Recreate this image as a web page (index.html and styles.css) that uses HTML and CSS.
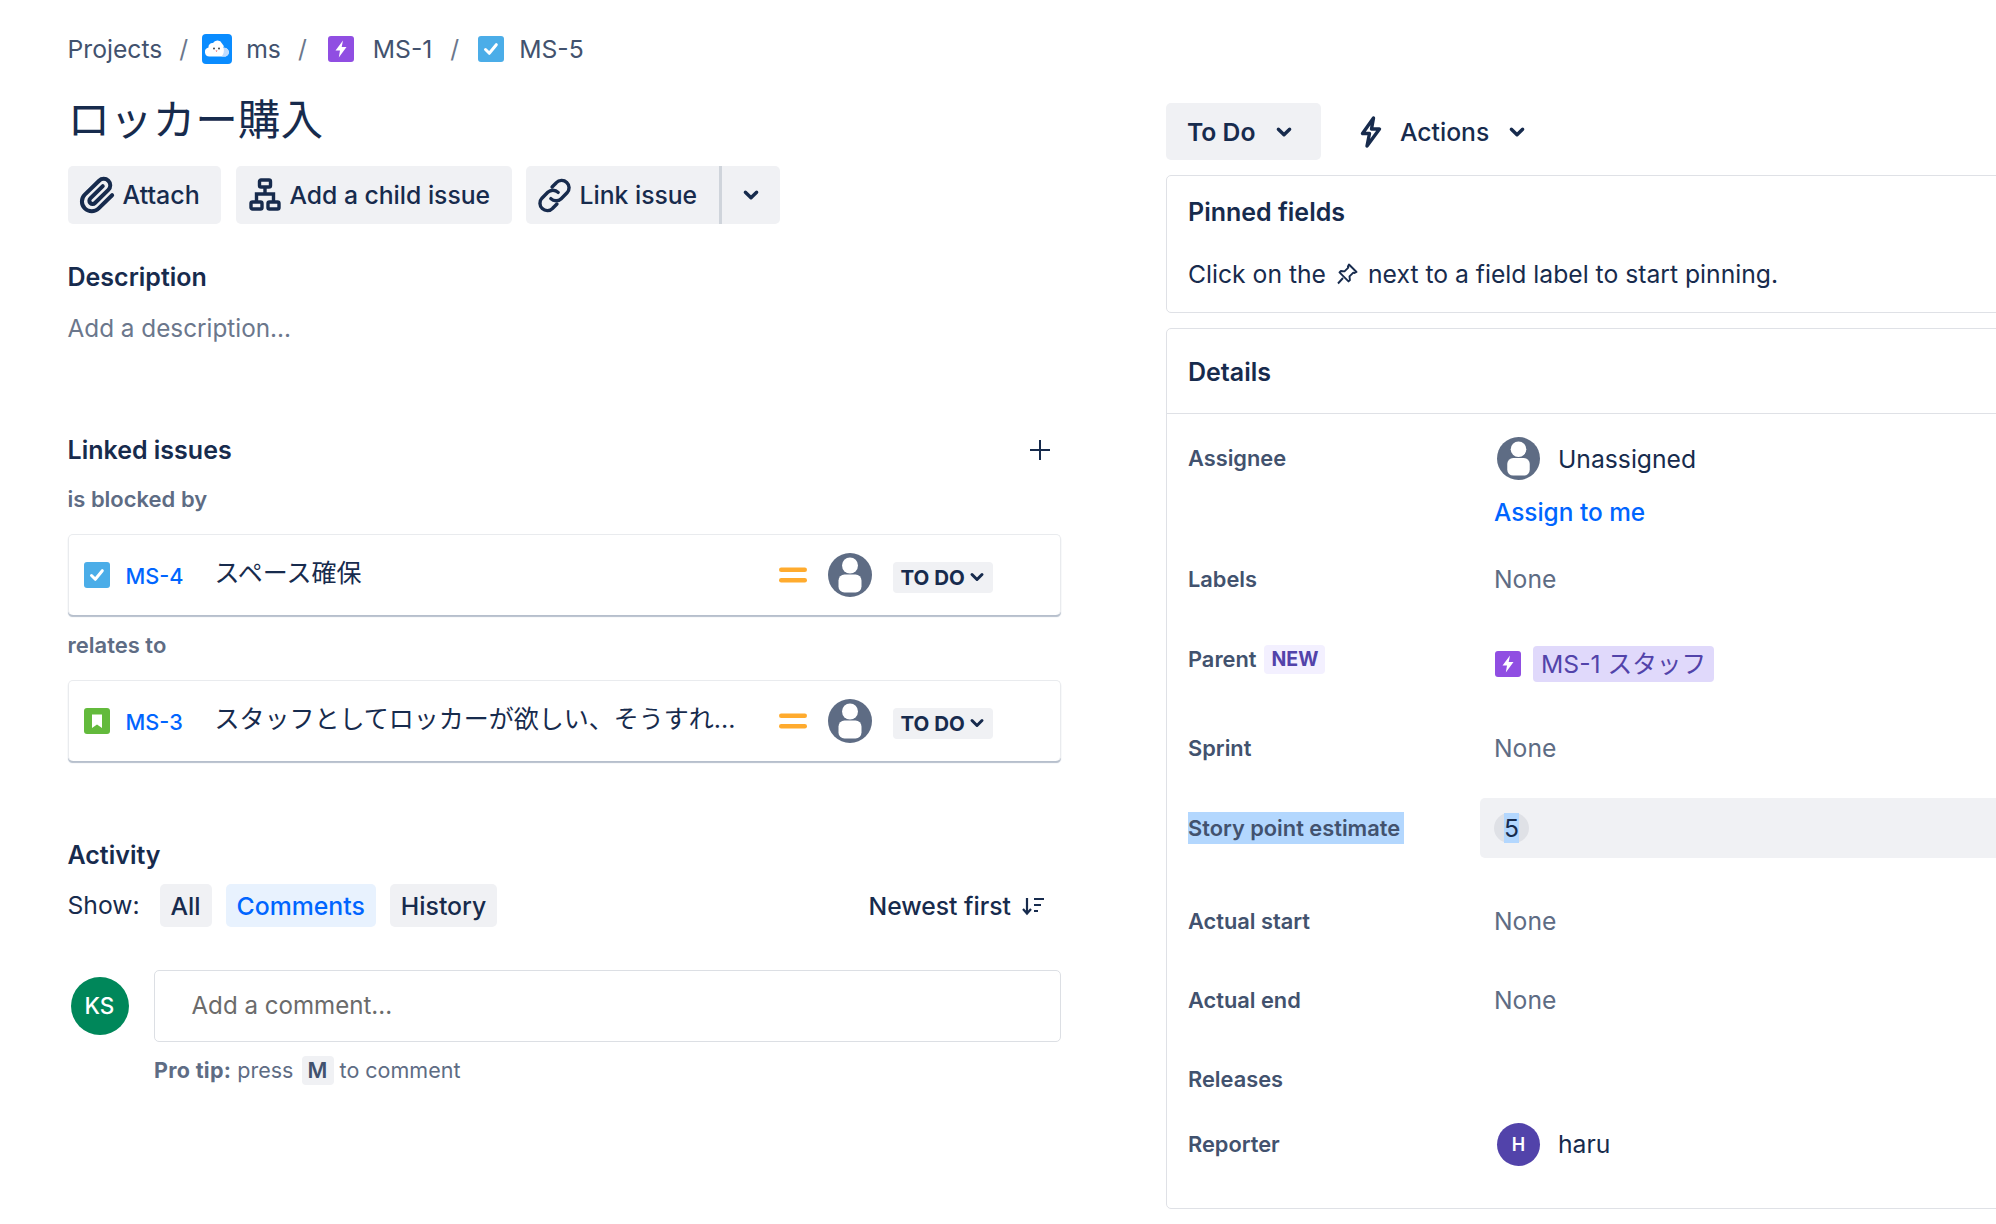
FILE: index.html
```html
<!DOCTYPE html>
<html lang="en">
<head>
	<meta charset="utf-8">
	<title>MS-5 ロッカー購入</title>
	<link rel="stylesheet" href="styles.css">
</head>
<body>
<svg class="defs" width="0" height="0">
	<symbol id="bolt" viewBox="0 0 26 26"><rect width="26" height="26" rx="3" fill="#904ee2"/><path d="M15 4.500 7.500 14.600h4.500L10.800 21.500l7.700-10.500h-4.800z" fill="#fff"/></symbol>
	<symbol id="task" viewBox="0 0 26 26"><rect width="26" height="26" rx="3" fill="#4bade8"/><path d="M7.500 13.500l3.800 3.800 7-8.600" fill="none" stroke="#fff" stroke-width="3" stroke-linecap="round" stroke-linejoin="round"/></symbol>
	<symbol id="story" viewBox="0 0 26 26"><rect width="26" height="26" rx="3" fill="#63ba3c"/><path d="M8 6.500h10v13.500l-5-3.600-5 3.600z" fill="#fff"/></symbol>
	<symbol id="nobody" viewBox="0 0 44 44"><circle cx="22" cy="22" r="22" fill="#5e6c84"/><circle cx="22" cy="12.500" r="8" fill="#fff"/><rect x="10.500" y="21.500" width="23" height="18" rx="6" fill="#fff"/></symbol>
	<symbol id="medium" viewBox="0 0 28 16"><rect y="0.500" width="28" height="4.500" rx="2.200" fill="#ffab2e"/><rect y="11" width="28" height="4.500" rx="2.200" fill="#ffab2e"/></symbol>
	<symbol id="chev" viewBox="0 0 16 16"><path d="M3 5.500l5 5 5-5" fill="none" stroke="#172b4d" stroke-width="3" stroke-linecap="round" stroke-linejoin="round"/></symbol>
</svg>

<div class="page">
	<main class="main">
		<nav class="crumbs">
			<span>Projects</span><span class="slash">/</span>
			<svg class="crumb-logo" viewBox="0 0 30 30"><rect width="30" height="30" rx="4" fill="#0a8cff"/><path d="M7.500 22.500a4.500 4.500 0 0 1-1-8.900 4 4 0 0 1 4.500-4.600 5 5 0 0 1 9 .5 4.500 4.500 0 0 1 1.500 4.500 4.300 4.300 0 0 1 2 8.500z" fill="#fff"/><path d="M21.500 14a4.300 4.300 0 0 1 2 8.500h-4c2-2 3-5.500 2-8.500z" fill="#bfdcff"/><circle cx="12" cy="14.500" r="0.900" fill="#333"/><circle cx="17" cy="14.500" r="0.900" fill="#333"/><path d="M13.500 16.500h2l-1 1.600z" fill="#f0524f"/></svg>
			<span>ms</span><span class="slash">/</span>
			<svg class="crumb-icon"><use href="#bolt"/></svg>
			<span>MS-1</span><span class="slash slash-tight">/</span>
			<svg class="crumb-icon crumb-task"><use href="#task"/></svg>
			<span>MS-5</span>
		</nav>

		<h1 class="title">ロッカー購入</h1>

		<div class="toolbar">
			<button class="btn btn-attach">
				<svg class="btn-icon" viewBox="0 0 24 24"><path fill="#172b4d" d="M11.643 17.965c-1.53 1.495-4.016 1.496-5.542.004a3.773 3.773 0 0 1 .002-5.412l7.147-6.985a2.316 2.316 0 0 1 3.233-.003c.893.873.895 2.282.004 3.153l-6.703 6.55a.653.653 0 0 1-.914-.008.62.62 0 0 1-.007-.887l6.229-6.09a1 1 0 0 0-1.398-1.43l-6.23 6.09a2.62 2.62 0 0 0-.007 3.742 2.653 2.653 0 0 0 3.71.011l6.703-6.55a4.203 4.203 0 0 0-.004-6.012 4.316 4.316 0 0 0-6.03.002L4.7 11.127a5.773 5.773 0 0 0-.001 8.273c2.306 2.254 6.043 2.252 8.34-.002l6.711-6.558a1 1 0 1 0-1.398-1.43l-6.709 6.555z"/></svg>
				Attach
			</button>
			<button class="btn btn-child">
				<svg class="btn-icon-child" viewBox="0 0 32 34"><g fill="none" stroke="#172b4d" stroke-width="3.400"><rect x="10.500" y="2" width="11" height="7" rx="1.500"/><rect x="2" y="24" width="11" height="7" rx="1.500"/><rect x="19" y="24" width="11" height="7" rx="1.500"/><path d="M16 9v7M7.500 24v-8h17v8"/></g></svg>
				Add a child issue
			</button>
			<div class="btn-group">
				<button class="btn btn-link">
					<svg class="btn-icon-link" viewBox="0 0 32 32"><g fill="none" stroke="#172b4d" stroke-width="2.800" stroke-linecap="round"><path d="M14 9l3.500-3.500a6 6 0 0 1 8.800 8.300l-4.800 4.800a6 6 0 0 1-8.500 0"/><path d="M18 23l-3.500 3.500a6 6 0 0 1-8.800-8.300l4.800-4.800a6 6 0 0 1 8.500 0"/></g></svg>
					Link issue
				</button>
				<button class="btn btn-more"><svg class="chev"><use href="#chev"/></svg></button>
			</div>
		</div>

		<h2 class="heading heading-desc">Description</h2>
		<p class="placeholder">Add a description...</p>

		<div class="linked-head">
			<h2 class="heading">Linked issues</h2>
			<svg class="plus" viewBox="0 0 22 22"><path d="M11 1v20M1 11h20" stroke="#172b4d" stroke-width="2" fill="none"/></svg>
		</div>

		<div class="relation">is blocked by</div>
		<div class="issue-card">
			<svg class="issue-type"><use href="#task"/></svg>
			<a class="issue-key">MS-4</a>
			<span class="issue-name">スペース確保</span>
			<svg class="priority"><use href="#medium"/></svg>
			<svg class="issue-user"><use href="#nobody"/></svg>
			<span class="lozenge">TO DO <svg class="lozenge-chev"><use href="#chev"/></svg></span>
		</div>

		<div class="relation relation-next">relates to</div>
		<div class="issue-card">
			<svg class="issue-type"><use href="#story"/></svg>
			<a class="issue-key">MS-3</a>
			<span class="issue-name">スタッフとしてロッカーが欲しい、そうすれ...</span>
			<svg class="priority"><use href="#medium"/></svg>
			<svg class="issue-user"><use href="#nobody"/></svg>
			<span class="lozenge">TO DO <svg class="lozenge-chev"><use href="#chev"/></svg></span>
		</div>

		<h2 class="heading heading-activity">Activity</h2>
		<div class="show-row">
			<span class="show-label">Show:</span>
			<span class="tab">All</span>
			<span class="tab tab-on">Comments</span>
			<span class="tab">History</span>
			<span class="sort">Newest first
				<svg class="sort-icon" viewBox="0 0 24 20"><path d="M6 2v15M2 13l4 4.500 4-4.500" fill="none" stroke="#172b4d" stroke-width="2.200"/><path d="M13 3h10M13 9h7M13 15h4" stroke="#172b4d" stroke-width="2.200"/></svg>
			</span>
		</div>

		<div class="comment-row">
			<span class="avatar-ks">KS</span>
			<div class="comment-box">Add a comment...</div>
		</div>
		<p class="protip"><b>Pro tip:</b> press <kbd class="key">M</kbd> to comment</p>
	</main>

	<aside class="side">
		<div class="status-row">
			<button class="status-btn">To Do <svg class="chev chev-status"><use href="#chev"/></svg></button>
			<span class="actions">
				<svg class="actions-bolt" viewBox="0 0 24 32"><path d="M14.500 2 3.500 17.500h7L8 30l12.500-17h-8z" fill="none" stroke="#172b4d" stroke-width="3.400" stroke-linejoin="round"/></svg>
				Actions
				<svg class="chev chev-actions"><use href="#chev"/></svg>
			</span>
		</div>

		<section class="panel panel-pinned">
			<h3 class="panel-title">Pinned fields</h3>
			<p class="pin-hint">Click on the
				<svg class="pin" viewBox="0 0 24 24"><path d="M14 2.500l7.500 7.500-2 1-1.200-.4-3.800 3.800.4 3.600-1.400 1.400-9-9 1.400-1.400 3.600.4 3.800-3.800-.4-1.200zM8 16l-5 5.500" fill="none" stroke="#172b4d" stroke-width="1.900" stroke-linejoin="round"/></svg>
				next to a field label to start pinning.</p>
		</section>

		<section class="panel panel-details">
			<h3 class="panel-title details-title">Details</h3>
			<div class="fields">
				<div class="label label-top">Assignee</div>
				<div class="value value-top">
					<div class="person"><svg class="person-pic"><use href="#nobody"/></svg>Unassigned</div>
					<a class="assign-me">Assign to me</a>
				</div>

				<div class="label">Labels</div>
				<div class="value muted">None</div>

				<div class="label label-parent"><span>Parent</span><span class="new-tag">NEW</span></div>
				<div class="value parent">
					<svg class="parent-icon"><use href="#bolt"/></svg>
					<span class="parent-chip">MS-1 スタッフ</span>
				</div>

				<div class="label">Sprint</div>
				<div class="value muted">None</div>

				<div class="label"><span class="selected selected-label">Story point estimate</span></div>
				<div class="value estimate"><span class="estimate-badge"><span class="selected">5</span></span></div>

				<div class="label">Actual start</div>
				<div class="value muted">None</div>

				<div class="label">Actual end</div>
				<div class="value muted">None</div>

				<div class="label">Releases</div>
				<div class="value"></div>

				<div class="label">Reporter</div>
				<div class="value person"><span class="person-pic avatar-h">H</span>haru</div>
			</div>
		</section>
	</aside>
</div>
</body>
</html>
```

FILE: styles.css
```css
html, body {
	margin: 0;
	padding: 0;
	height: 1224px;
	overflow: hidden;
	background: #fff;
}
body {
	font-family: Inter, "Noto Sans CJK JP", "Noto Sans", sans-serif;
	font-size: 24.700px;
	color: #172b4d;
}
.defs {
	position: absolute;
}
h1, h2, h3, p {
	margin: 0;
	font-weight: inherit;
}
button {
	font: inherit;
	color: inherit;
	border: 0;
}
svg {
	flex: none;
}
.page {
	display: flex;
	padding-left: 67.500px;
}

/* left column */
.main {
	width: 993.500px;
	flex: none;
}
.crumbs {
	display: flex;
	align-items: center;
	height: 36px;
	margin-top: 31px;
	color: #42526e;
	line-height: 36px;
}
.slash {
	margin: 0 14px 0 17px;
	color: #6b778c;
}
.slash-tight {
	margin: 0 12px 0 18px;
}
.crumb-logo {
	width: 30px;
	height: 30px;
	margin-right: 14px;
}
.crumb-icon {
	width: 26px;
	height: 26px;
	margin-left: 7px;
	margin-right: 19px;
}
.crumb-task {
	margin-right: 15px;
}
.title {
	margin-top: 28px;
	font-size: 42.600px;
	line-height: 50px;
	font-weight: 400;
}
.toolbar {
	display: flex;
	gap: 15px;
	margin-top: 21px;
}
.btn {
	display: flex;
	align-items: center;
	height: 58px;
	padding: 0;
	background: #f0f1f4;
	border-radius: 5px;
	font-size: 24.700px;
	font-weight: 500;
	white-space: nowrap;
}
.btn-attach {
	width: 153px;
	padding-left: 6px;
	gap: 1px;
	font-size: 25px;
}
.btn-icon {
	width: 48px;
	height: 48px;
}
.btn-child {
	width: 276px;
	padding-left: 13px;
	gap: 9px;
}
.btn-icon-child {
	width: 32px;
	height: 34px;
}
.btn-group {
	display: flex;
	margin-left: -1px;
}
.btn-link {
	padding-left: 9px;
	gap: 6px;
	border-radius: 5px 0 0 5px;
	border-right: 3px solid #cfd4db;
	box-sizing: content-box;
	width: 184px;
}
.btn-icon-link {
	width: 39px;
	height: 39px;
}
.btn-more {
	width: 58px;
	justify-content: center;
	border-radius: 0 5px 5px 0;
}
.chev {
	width: 18px;
	height: 18px;
}
.heading {
	font-size: 25px;
	line-height: 32px;
	font-weight: 600;
}
.heading-desc {
	margin-top: 37px;
}
.placeholder {
	margin-top: 19px;
	font-size: 24.300px;
	line-height: 32px;
	color: #6b778c;
}
.linked-head {
	display: flex;
	justify-content: space-between;
	align-items: center;
	margin-top: 90px;
	padding-right: 10px;
}
.plus {
	width: 22px;
	height: 22px;
}
.relation {
	margin-top: 19px;
	font-size: 22px;
	line-height: 28px;
	font-weight: 600;
	color: #5e6c84;
}
.relation-next {
	margin-top: 16px;
}
.issue-card {
	display: flex;
	align-items: center;
	box-sizing: border-box;
	height: 81px;
	margin-top: 21px;
	padding-left: 15px;
	border: 1px solid #e9ebee;
	border-bottom: 0;
	border-radius: 5px;
	box-shadow: 0 2px 1px -0.500px #b6bfcc;
}
.issue-type {
	width: 26px;
	height: 26px;
}
.issue-key {
	width: 89px;
	margin-left: 16px;
	font-size: 21.700px;
	font-weight: 500;
	color: #0065ff;
	position: relative;
	top: 1px;
}
.issue-name {
	width: 564px;
	font-size: 25px;
	white-space: nowrap;
	position: relative;
	top: -4px;
}
.priority {
	width: 28px;
	height: 16px;
}
.issue-user {
	width: 44px;
	height: 44px;
	margin-left: 21px;
}
.lozenge {
	display: flex;
	align-items: center;
	gap: 4px;
	height: 31px;
	margin-left: 21px;
	padding: 0 8px;
	background: #f0f1f4;
	border-radius: 4px;
	font-size: 20.500px;
	font-weight: 700;
	position: relative;
	top: 2px;
}
.lozenge-chev {
	width: 16px;
	height: 16px;
}
.heading-activity {
	margin-top: 78px;
}
.show-row {
	display: flex;
	align-items: center;
	margin-top: 13px;
}
.show-label {
	width: 92px;
	position: relative;
	top: -1px;
}
.tab {
	height: 43px;
	margin-right: 14px;
	padding: 0 11px;
	background: #f0f1f4;
	border-radius: 5px;
	font-size: 24.800px;
	line-height: 44px;
	font-weight: 500;
}
.tab-on {
	background: #e8f2fe;
	color: #0065ff;
}
.sort {
	display: flex;
	align-items: center;
	gap: 10px;
	margin-left: auto;
	margin-right: 16px;
	font-weight: 500;
}
.sort-icon {
	width: 24px;
	height: 20px;
}
.comment-row {
	display: flex;
	margin-top: 43px;
}
.avatar-ks {
	width: 58px;
	height: 58px;
	margin: 7px 25px 0 3px;
	border-radius: 50%;
	background: #00875a;
	color: #fff;
	font-size: 22.500px;
	font-weight: 500;
	line-height: 58px;
	text-align: center;
}
.comment-box {
	flex: 1;
	box-sizing: border-box;
	height: 72px;
	padding-left: 37px;
	border: 1px solid #dcdfe4;
	border-radius: 5px;
	font-size: 24.100px;
	line-height: 70px;
	color: #6b6b6b;
}
.protip {
	margin-top: 14px;
	margin-left: 86.500px;
	font-size: 21.500px;
	line-height: 28px;
	color: #5e6c84;
}
.protip b {
	font-weight: 700;
	letter-spacing: 0.300px;
}
.key {
	display: inline-block;
	width: 32px;
	height: 29px;
	margin: 0 0 0 2px;
	background: #f0f1f4;
	border-radius: 4px;
	font-family: inherit;
	font-weight: 600;
	color: #42526e;
	line-height: 29px;
	text-align: center;
}

/* right column */
.side {
	flex: none;
	width: 850px;
	margin-left: 105px;
}
.status-row {
	display: flex;
	align-items: center;
	margin-top: 103px;
}
.status-btn {
	display: flex;
	align-items: center;
	box-sizing: border-box;
	width: 155px;
	height: 57px;
	padding: 0 0 0 21px;
	background: #f0f1f4;
	border-radius: 5px;
	font-weight: 600;
}
.chev-status {
	margin-left: 20px;
}
.actions {
	display: flex;
	align-items: center;
	margin-left: 38px;
	font-weight: 500;
}
.actions-bolt {
	width: 24px;
	height: 32px;
	margin-right: 17px;
}
.chev-actions {
	margin-left: 19px;
}
.panel {
	box-sizing: border-box;
	border: 1px solid #dfe1e6;
	border-radius: 5px;
	padding-left: 21px;
}
.panel-pinned {
	height: 138px;
	margin-top: 15px;
	padding-top: 19.500px;
}
.panel-title {
	font-size: 25px;
	line-height: 32px;
	font-weight: 600;
}
.pin-hint {
	display: flex;
	align-items: center;
	gap: 9px;
	margin-top: 30px;
	line-height: 32px;
}
.pin {
	width: 24px;
	height: 24px;
}
.panel-details {
	height: 881px;
	margin-top: 15px;
	padding-left: 0;
}
.details-title {
	height: 84px;
	padding-left: 21px;
	border-bottom: 1px solid #dfe1e6;
	line-height: 86px;
}
.fields {
	display: grid;
	grid-template-columns: 313px 1fr;
	grid-template-rows: 135px 60px 110px 58px 102px 84px 74px 84px 46px;
}
.label {
	display: flex;
	align-items: center;
	padding-left: 21px;
	font-size: 21.800px;
	font-weight: 600;
	color: #42526e;
}
.label-top {
	align-items: flex-start;
	padding-top: 29px;
	line-height: 30px;
}
.label-parent {
	gap: 8px;
	padding-bottom: 10px;
}
.value {
	display: flex;
	align-items: center;
	padding-left: 14px;
}
.value-top {
	flex-direction: column;
	align-items: flex-start;
	padding-top: 23px;
}
.muted {
	color: #5e6c84;
}
.person {
	display: flex;
	align-items: center;
	gap: 18px;
}
.person-pic {
	width: 43px;
	height: 43px;
	margin-left: 3px;
}
.assign-me {
	margin-top: 16px;
	font-size: 24.400px;
	line-height: 32px;
	font-weight: 500;
	color: #0065ff;
}
.new-tag {
	height: 29px;
	padding: 0 7px;
	background: #f3f0ff;
	border-radius: 4px;
	color: #5243aa;
	font-size: 19.500px;
	line-height: 29px;
	font-weight: 700;
}
.parent-icon {
	width: 26px;
	height: 26px;
	margin-left: 1px;
}
.parent-chip {
	margin-left: 12px;
	height: 36px;
	padding: 0 8px;
	background: #e0d9fb;
	border-radius: 4px;
	line-height: 36px;
	color: #5243aa;
}
.estimate {
	height: 60px;
	align-self: center;
	padding-left: 14px;
	background: #f0f1f4;
	border-radius: 5px;
}
.estimate-badge {
	display: flex;
	justify-content: center;
	width: 35px;
	height: 30px;
	background: #dfe1e6;
	border-radius: 15px;
	line-height: 30px;
}
.selected {
	background: #b3d7fe;
}
.selected-label {
	padding: 3px 4px 3px 0;
}
.avatar-h {
	display: flex;
	justify-content: center;
	align-items: center;
	border-radius: 50%;
	background: #5243aa;
	color: #fff;
	font-size: 18px;
	font-weight: 600;
}
```
